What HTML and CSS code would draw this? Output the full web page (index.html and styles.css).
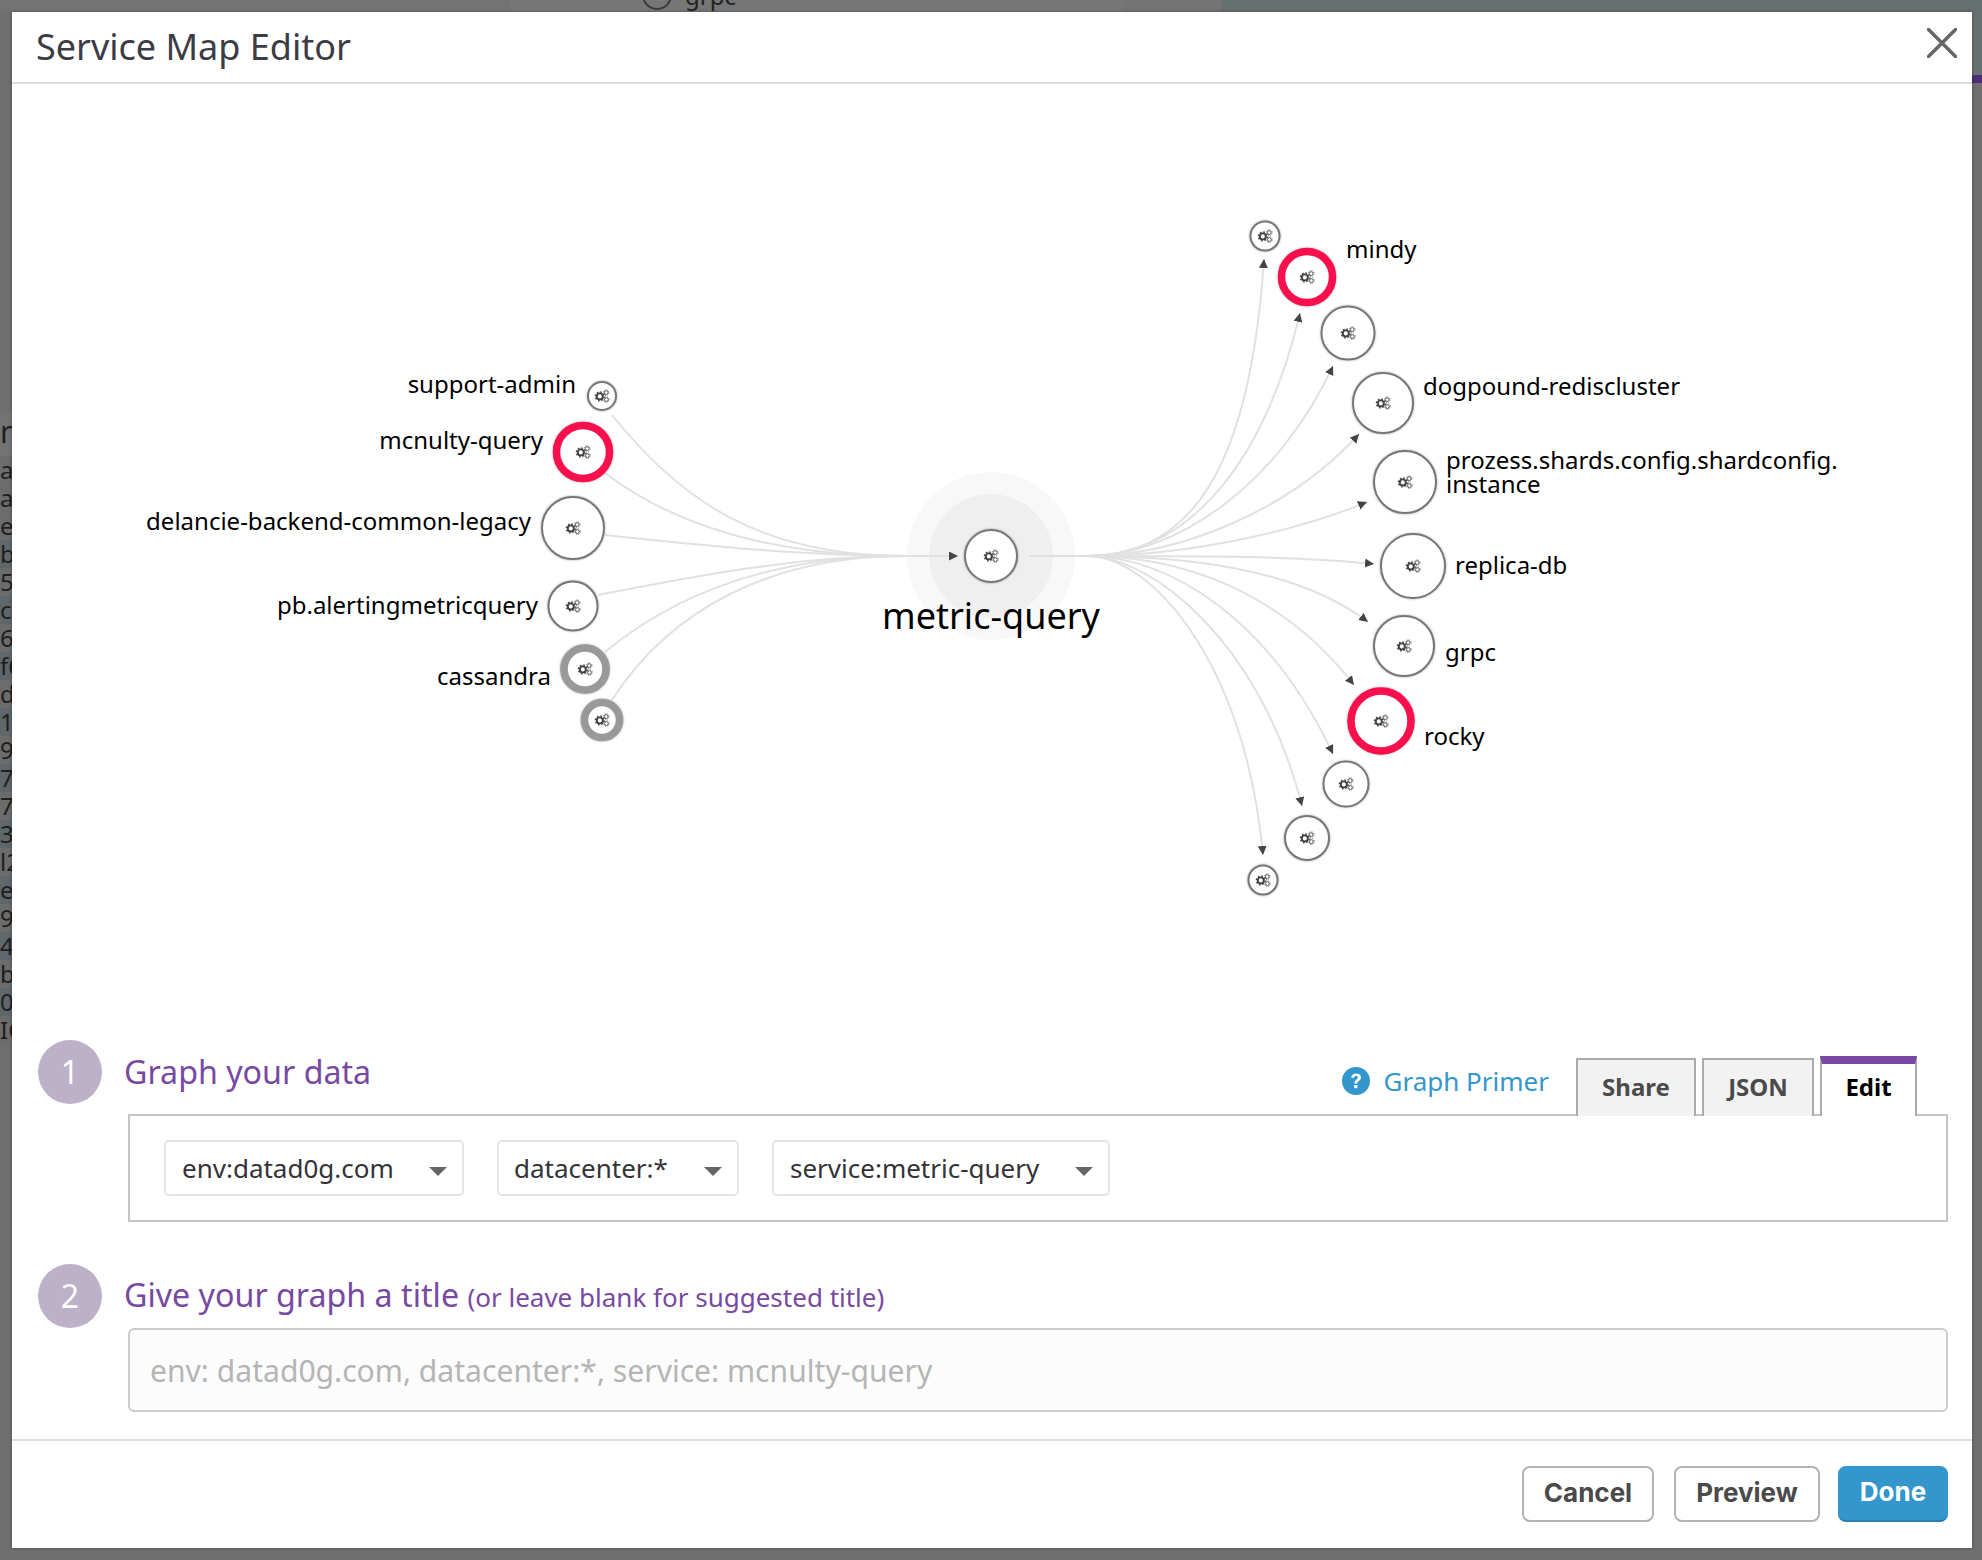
FILE: index.html
```html
<!DOCTYPE html>
<html lang="en">
<head>
<meta charset="utf-8">
<title>Service Map Editor</title>
<link rel="stylesheet" href="styles.css">
</head>
<body>
<div class="backdrop">
  <div class="bd-top">
    <div class="bd-a"></div>
    <div class="bd-b"><span class="bd-node"></span><span class="bd-grpc">grpc</span></div>
    <div class="bd-c"></div>
    <div class="bd-d"></div>
  </div>
  <div class="bd-left">
    <span class="big">n</span><span>ac</span><span>a</span><span>e(</span><span class="alt">b</span><span>5</span><span class="alt">c</span><span>6</span><span class="alt">f6</span><span>d</span><span class="alt">1</span><span>9t</span><span class="alt">7.</span><span>7</span><span class="alt">3</span><span>l2</span><span class="alt">e6</span><span>9</span><span class="alt">4:</span><span>b.</span><span class="alt">0</span><span>IC</span>
  </div>
  <div class="bd-right"><div class="bd-right-top"></div><div class="bd-right-bar"></div></div>
</div>

<main class="modal">
  <header class="modal-head">
    <h1 class="modal-title">Service Map Editor</h1>
    <svg class="close" viewBox="0 0 30 30" width="30" height="30"><path d="M1.5 1.5 28.5 28.5M28.5 1.5 1.5 28.5"/></svg>
  </header>

  <svg class="map" viewBox="12 84 1960 956" width="1960" height="956">
    <defs>
      <marker id="arrow" markerUnits="userSpaceOnUse" markerWidth="10" markerHeight="10" refX="9" refY="4.5" orient="auto">
        <path class="arrow-head" d="M0 0 9 4.5 0 9Z"/>
      </marker>
      <g id="gears">
        <circle class="g-big" cx="-2.2" cy="0.4" r="3"/>
        <circle class="g-big-teeth" cx="-2.2" cy="0.4" r="4.4"/>
        <circle class="g-small" cx="4.2" cy="-3.4" r="1.9"/>
        <circle class="g-small-teeth" cx="4.2" cy="-3.4" r="2.9"/>
        <circle class="g-small" cx="4.4" cy="3.6" r="1.9"/>
        <circle class="g-small-teeth" cx="4.4" cy="3.6" r="2.9"/>
      </g>
    </defs>

    <circle class="halo-outer" cx="991" cy="556" r="84"/>
    <circle class="halo-inner" cx="991" cy="556" r="62"/>

    <g class="edges">
      <path d="M612 415C680 500 760 556 905 556"/>
      <path d="M605 473C680 530 780 556 905 556"/>
      <path d="M605 535C700 545 800 556 905 556"/>
      <path d="M598 595C700 575 800 556 905 556"/>
      <path d="M605 652C680 590 780 556 905 556"/>
      <path d="M612 700C670 610 770 556 905 556"/>
      <path marker-end="url(#arrow)" d="M905 556H958"/>
      <path d="M1029 556H1087"/>
      <path marker-end="url(#arrow)" d="M1087 556C1190 556 1250 470 1264 259"/>
      <path marker-end="url(#arrow)" d="M1087 556C1190 556 1265 460 1300 313"/>
      <path marker-end="url(#arrow)" d="M1087 556C1180 556 1280 480 1333 366"/>
      <path marker-end="url(#arrow)" d="M1087 556C1180 556 1290 510 1359 434"/>
      <path marker-end="url(#arrow)" d="M1087 556C1190 556 1300 530 1367 502"/>
      <path marker-end="url(#arrow)" d="M1087 556C1200 556 1300 556 1374 564"/>
      <path marker-end="url(#arrow)" d="M1087 556C1190 556 1300 570 1368 622"/>
      <path marker-end="url(#arrow)" d="M1087 556C1180 556 1280 590 1354 685"/>
      <path marker-end="url(#arrow)" d="M1087 556C1170 556 1270 620 1333 754"/>
      <path marker-end="url(#arrow)" d="M1087 556C1150 556 1260 640 1302 806"/>
      <path marker-end="url(#arrow)" d="M1087 556C1150 556 1245 660 1263 855"/>
    </g>

    <g class="nodes">
      <circle class="n" cx="602" cy="396" r="14"/><use href="#gears" x="602" y="396"/>
      <circle class="n red" cx="583" cy="452" r="26.5"/><use href="#gears" x="583" y="452"/>
      <circle class="n" cx="573" cy="528" r="31"/><use href="#gears" x="573" y="528"/>
      <circle class="n" cx="573" cy="606" r="24.5"/><use href="#gears" x="573" y="606"/>
      <circle class="n grey" cx="585" cy="669" r="21"/><use href="#gears" x="585" y="669"/>
      <circle class="n grey" cx="602" cy="720" r="17.5"/><use href="#gears" x="602" y="720"/>
      <circle class="n" cx="991" cy="556" r="26"/><use href="#gears" x="991" y="556"/>
      <circle class="n" cx="1265" cy="236" r="14.5"/><use href="#gears" x="1265" y="236"/>
      <circle class="n red" cx="1307" cy="277" r="25.5"/><use href="#gears" x="1307" y="277"/>
      <circle class="n" cx="1348" cy="333" r="26.5"/><use href="#gears" x="1348" y="333"/>
      <circle class="n" cx="1383" cy="403" r="30"/><use href="#gears" x="1383" y="403"/>
      <circle class="n" cx="1405" cy="482" r="31"/><use href="#gears" x="1405" y="482"/>
      <circle class="n" cx="1413" cy="566" r="32"/><use href="#gears" x="1413" y="566"/>
      <circle class="n" cx="1404" cy="646" r="30"/><use href="#gears" x="1404" y="646"/>
      <circle class="n red" cx="1381" cy="721" r="30"/><use href="#gears" x="1381" y="721"/>
      <circle class="n" cx="1346" cy="784" r="22.5"/><use href="#gears" x="1346" y="784"/>
      <circle class="n" cx="1307" cy="838" r="22"/><use href="#gears" x="1307" y="838"/>
      <circle class="n" cx="1263" cy="880" r="14.5"/><use href="#gears" x="1263" y="880"/>
    </g>

    <g class="labels">
      <text class="end" x="576" y="393">support-admin</text>
      <text class="end" x="543" y="449">mcnulty-query</text>
      <text class="end" x="531" y="530">delancie-backend-common-legacy</text>
      <text class="end" x="538" y="614">pb.alertingmetricquery</text>
      <text class="end" x="551" y="685">cassandra</text>
      <text x="1346" y="258">mindy</text>
      <text x="1423" y="395">dogpound-rediscluster</text>
      <text x="1446" y="469">prozess.shards.config.shardconfig.</text>
      <text x="1446" y="493">instance</text>
      <text x="1455" y="574">replica-db</text>
      <text x="1445" y="661">grpc</text>
      <text x="1424" y="745">rocky</text>
      <text class="center-label" x="991" y="629">metric-query</text>
    </g>
  </svg>

  <section class="step">
    <div class="step-head step-head-one">
      <div class="step-num">1</div>
      <h2 class="step-title">Graph your data</h2>
      <div class="tools">
        <a class="primer">
          <svg class="help" viewBox="0 0 28 28" width="28" height="28"><circle cx="14" cy="14" r="14"/><path d="M9.2 10.6C9.6 7.8 11.6 6.4 14.2 6.4 17 6.4 19 8 19 10.4 19 13.6 15.2 13.8 15.2 16.6H12.4C12.4 12.8 15.9 12.6 15.9 10.6 15.9 9.6 15.2 9 14.1 9 13 9 12.2 9.6 11.9 11.1Z"/><rect x="12.2" y="18" width="3.2" height="3.2"/></svg>
          <span>Graph Primer</span>
        </a>
        <div class="tabs">
          <button class="tab tab-share">Share</button>
          <button class="tab tab-json">JSON</button>
          <button class="tab tab-edit">Edit</button>
        </div>
      </div>
    </div>
    <div class="scope-box">
      <div class="select select-env"><span>env:datad0g.com</span><i class="caret"></i></div>
      <div class="select select-dc"><span>datacenter:*</span><i class="caret"></i></div>
      <div class="select select-svc"><span>service:metric-query</span><i class="caret"></i></div>
    </div>
  </section>

  <section class="step step-two">
    <div class="step-head">
      <div class="step-num">2</div>
      <h2 class="step-title">Give your graph a title <small>(or leave blank for suggested title)</small></h2>
    </div>
    <div class="title-input">env: datad0g.com, datacenter:*, service: mcnulty-query</div>
  </section>

  <footer class="modal-foot">
    <button class="btn">Cancel</button>
    <button class="btn btn-preview">Preview</button>
    <button class="btn btn-done">Done</button>
  </footer>
</main>
</body>
</html>
```
FILE: styles.css
```css
* { box-sizing: border-box; }
html, body { margin: 0; padding: 0; }
body {
  width: 1982px;
  height: 1560px;
  overflow: hidden;
  position: relative;
  background: #6f6f6f;
  font-family: "Noto Sans", "Open Sans", sans-serif;
}

/* page dimmed behind the dialog */
.backdrop { position: absolute; inset: 0; overflow: hidden; }
.bd-top { display: flex; height: 12px; }
.bd-a { width: 510px; background: #737373; }
.bd-b { width: 615px; background: #767676; overflow: hidden; position: relative; }
.bd-grpc { position: absolute; left: 175px; top: -21px; font-size: 24px; color: #222; }
.bd-node { position: absolute; left: 132px; top: -20px; width: 30px; height: 30px; border: 2px solid #3a3a3a; border-radius: 50%; }
.bd-c { width: 97px; background: #737373; }
.bd-d { flex: 1; background: #66706f; }
.bd-left {
  position: absolute; left: 0; top: 412px; width: 12px; overflow: hidden;
  display: flex; flex-direction: column; background: #6c6c6c;
  font-size: 24px; color: #1f1f1f; white-space: nowrap;
}
.bd-left span { display: block; height: 28px; line-height: 28px; }
.bd-left .big { height: 44px; line-height: 40px; font-size: 30px; background: #737373; }
.bd-left .alt { background: #5f676b; }
.bd-right { position: absolute; right: 0; top: 0; width: 10px; }
.bd-right-top { height: 75px; background: #66706f; }
.bd-right-bar { height: 8px; background: #4a2f78; }

/* dialog */
.modal {
  position: absolute; left: 12px; top: 12px; width: 1960px; height: 1536px;
  background: #fff; display: flex; flex-direction: column;
  box-shadow: 0 0 3px rgba(0,0,0,.35);
}
.modal-head {
  height: 72px; flex: none; border-bottom: 2px solid #dedede;
  display: flex; align-items: flex-start; justify-content: space-between;
  padding: 0 15px 0 24px;
}
.modal-title { margin: 0; font-size: 36px; line-height: 70px; font-weight: 400; color: #3c3c44; }
.close { margin-top: 16px; }
.close path { fill: none; stroke: #666; stroke-width: 3.4; stroke-linecap: round; }

/* diagram */
.map { display: block; flex: none; }
.halo-outer { fill: #f8f8f8; }
.halo-inner { fill: #efefef; }
.edges path { fill: none; stroke: #e1e1e1; stroke-width: 2; }
.arrow-head { fill: #444; }
.n { fill: #fff; stroke: #777; stroke-width: 2; filter: drop-shadow(0 0 1px rgba(0,0,0,.35)); }
.red { stroke: #f90f4b; stroke-width: 7.5; }
.grey { stroke: #999; stroke-width: 7.6; }
.g-big { fill: none; stroke: #444; stroke-width: 1.9; }
.g-big-teeth { fill: none; stroke: #444; stroke-width: 1.5; stroke-dasharray: 1.6 1.85; }
.g-small { fill: none; stroke: #555; stroke-width: 1; }
.g-small-teeth { fill: none; stroke: #555; stroke-width: .8; stroke-dasharray: 1 1.3; }
.labels text { font-size: 24px; fill: #000; }
.labels .end { text-anchor: end; }
.labels .center-label { font-size: 36px; text-anchor: middle; }

/* steps */
.step { padding: 0 24px 0 26px; flex: none; }
.step-head { display: flex; align-items: center; }
.step-head-one { height: 74px; align-items: flex-start; }
.step-num {
  width: 64px; height: 64px; border-radius: 50%; background: #bdb1c9; flex: none;
  color: #fff; font-size: 32px; line-height: 64px; text-align: center;
}
.step-title {
  margin: 0 0 0 22px; font-size: 32.2px; line-height: 64px; font-weight: 400; color: #7849a3; white-space: nowrap;
}
.step-title small { font-size: 26px; }
.tools { margin-left: auto; margin-right: 31px; display: flex; align-items: flex-start; position: relative; z-index: 1; }
.primer {
  display: flex; align-items: center; gap: 14px; margin: 25px 27px 0 0;
  color: #3396cc; font-size: 26px; line-height: 32px;
}
.help circle { fill: #3396cc; }
.help path, .help rect { fill: #fff; }
.tabs { display: flex; align-items: flex-end; gap: 6px; margin-top: 16px; height: 60px; }
.tab {
  font: 700 24px/1 "Noto Sans", "Open Sans", sans-serif; color: #4a4a4a; background: #f2f2f2;
  border: 2px solid #aaa; border-bottom: 0; height: 58px; padding: 0 0 2px;
}
.tab-share { width: 120px; }
.tab-json { width: 112px; }
.tab-edit { width: 97px; height: 60px; background: #fff; color: #000; border-top: 8px solid #7849a3; padding: 0 0 6px; }
.scope-box {
  margin-left: 90px; height: 108px; border: 2px solid #c4c4c4; background: #fff;
  display: flex; gap: 33px; padding: 24px 34px;
}
.select {
  height: 56px; border: 2px solid #e4e4e8; border-radius: 5px; padding: 0 15px 0 16px;
  display: flex; align-items: center; justify-content: space-between;
  font-size: 26px; color: #333338; background: #fff;
}
.select-env { width: 300px; }
.select-dc { width: 242px; padding-left: 15px; }
.select-svc { width: 338px; }
.caret {
  width: 0; height: 0; border-left: 9px solid transparent; border-right: 9px solid transparent;
  border-top: 9px solid #666; margin-top: 6px;
}
.step-two { margin-top: 42px; }
.step-two .step-head { height: 64px; }
.step-two .step-title { line-height: 66px; }
.title-input {
  margin-left: 90px; height: 84px; border: 2px solid #ccc; border-radius: 6px; background: #fcfcfc;
  padding: 0 20px; font-size: 30.1px; line-height: 81px; color: #b5b5b5;
}
.modal-foot {
  margin-top: 27px; border-top: 2px solid #e0e0e0; flex: 1;
  display: flex; justify-content: flex-end; align-items: flex-start; gap: 20px; padding: 25px 24px 0 0;
}
.btn {
  height: 56px; width: 132px; border: 2px solid #b3b3b3; border-radius: 8px; background: #fff;
  font: 700 26px/1 Inter, "Liberation Sans", sans-serif; color: #4a4a4a; padding: 0 0 2px;
}
.btn-preview { width: 146px; }
.btn-done { width: 110px; margin-left: -2px; background: #3396cc; border: 0; border-bottom: 2px solid #2a7fae; color: #fff; }
```
